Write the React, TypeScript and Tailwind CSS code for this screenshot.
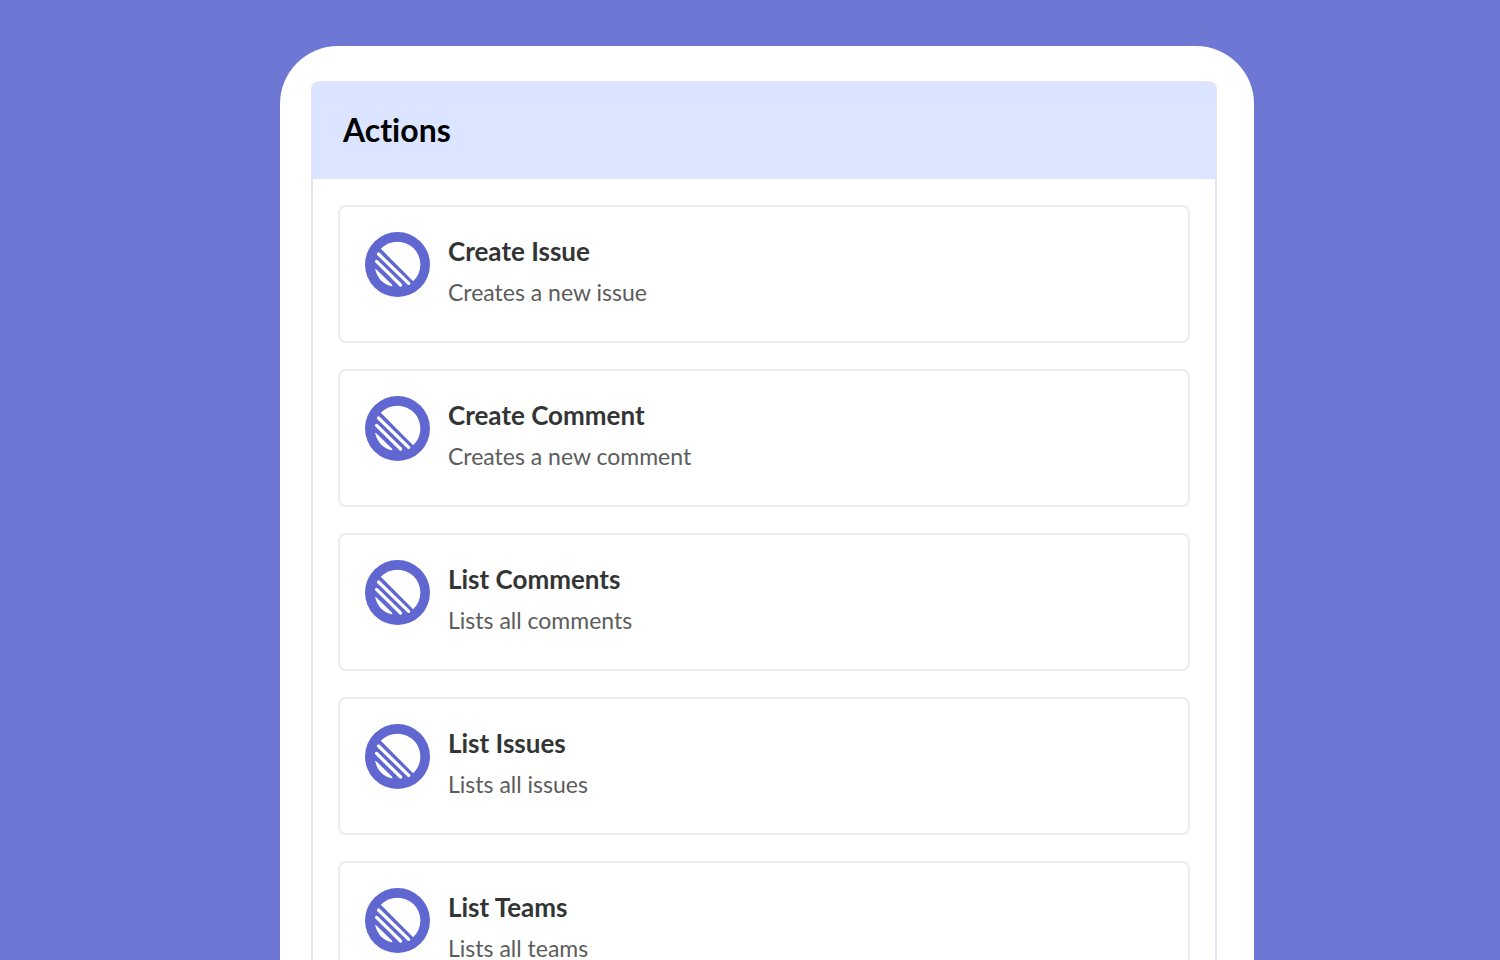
import React from 'react';

const actions = [
  { title: 'Create Issue', description: 'Creates a new issue' },
  { title: 'Create Comment', description: 'Creates a new comment' },
  { title: 'List Comments', description: 'Lists all comments' },
  { title: 'List Issues', description: 'Lists all issues' },
  { title: 'List Teams', description: 'Lists all teams' },
];

function LinearLogo() {
  return (
    <svg viewBox="0 0 64 64" className="size-[65px] shrink-0" fill="none" aria-hidden="true">
      <circle cx="32" cy="32" r="32" fill="#6067d0" />
      <path d="M15.6 16.6A22.5 22.5 0 0 1 32 9.5A22.5 22.5 0 0 1 54.5 32A22.5 22.5 0 0 1 47.4 48.4Z" fill="#fff" />
      <g stroke="#fff" strokeWidth="3.2" strokeLinecap="round">
        <path d="M13.3 21.7 43 50.6" />
        <path d="M11.4 29 35 52.2" />
      </g>
      <path d="M10.2 37.2Q9.4 35.4 11 36.6L26.4 51.8Q28 53.8 25.8 53.4C18 51.5 12 45.4 10.2 37.2Z" fill="#fff" />
    </svg>
  );
}

function ActionCard({ title, description }: { title: string; description: string }) {
  return (
    <li className="flex h-[138px] gap-[18px] rounded-lg border-2 border-[#ececee] p-[25px]">
      <LinearLogo />
      <div>
        <h3 className="text-[26px] leading-[38px] font-bold text-[#333535]">{title}</h3>
        <p className="mt-2.5 text-[23px] leading-6 text-[#5c5c5c]">{description}</p>
      </div>
    </li>
  );
}

export default function App() {
  return (
    <main className="h-screen overflow-hidden bg-[#6e78d4] pt-[46px] pl-[34px] font-['Lato',sans-serif] [font-variant-ligatures:none]">
      <div className="mx-auto max-w-[974px] rounded-t-[58px] bg-white pt-[35px] pr-[37px] pl-[31px]">
        <section className="rounded-t-lg border-2 border-[#e0e5fd]">
          <h2 className="bg-[#dbe5ff] px-[30px] pt-[27px] pb-[29px] text-[32px] leading-10 font-bold text-black">Actions</h2>
          <ul className="flex flex-col gap-[26px] px-[25px] py-[26px]">
            {actions.map((action) => (
              <ActionCard key={action.title} {...action} />
            ))}
          </ul>
        </section>
      </div>
    </main>
  );
}
